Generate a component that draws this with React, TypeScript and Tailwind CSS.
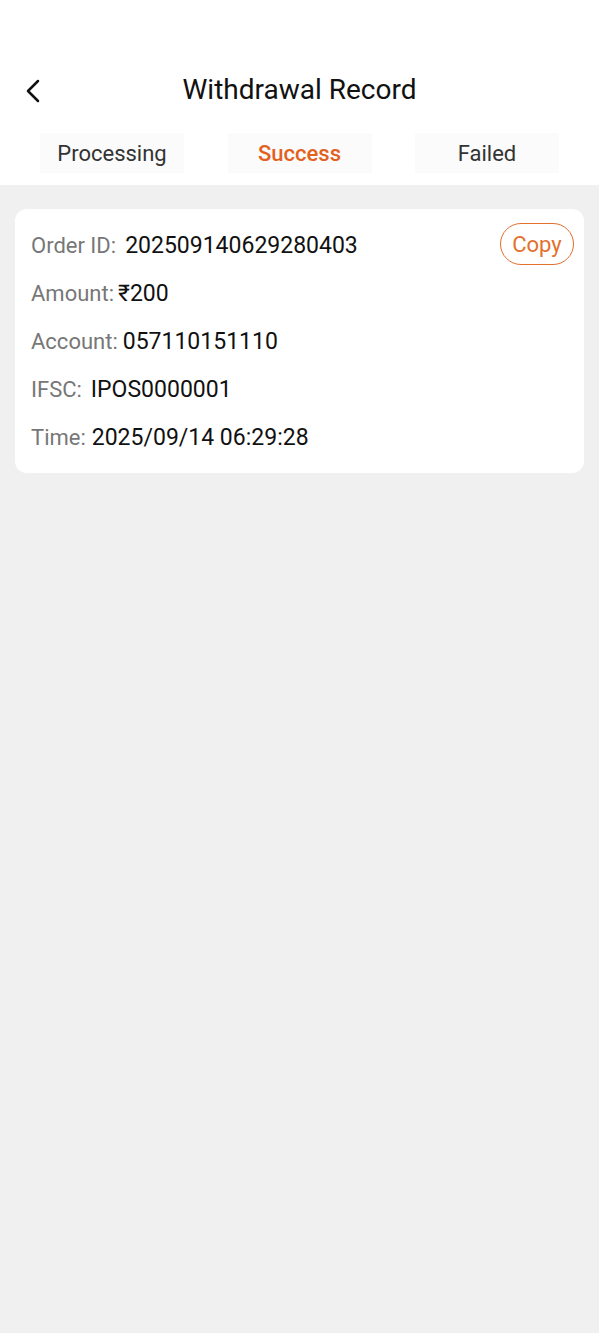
import { ChevronLeft } from "lucide-react";

const TABS = ["Processing", "Success", "Failed"];

const ROWS: { label: string; value: string; gap: string }[] = [
  { label: "Order ID:", value: "202509140629280403", gap: "ml-[9px]" },
  { label: "Amount:", value: "₹200", gap: "ml-[4px]" },
  { label: "Account:", value: "057110151110", gap: "ml-[5px]" },
  { label: "IFSC:", value: "IPOS0000001", gap: "ml-[9px]" },
  { label: "Time:", value: "2025/09/14 06:29:28", gap: "ml-[6px]" },
];

export default function App() {
  const active = "Success";
  return (
    <div
      className="min-h-[1333px] w-full bg-[#f0f0f0]"
      style={{ fontFamily: "Roboto, 'Noto Sans', sans-serif" }}
    >
      <div className="bg-white pt-[60px]">
        <div className="relative flex h-[60px] items-center justify-center">
          <button className="absolute left-[13px] top-[11px] text-[#111]">
            <ChevronLeft size={40} strokeWidth={1.5} />
          </button>
          <h1 className="text-[28px] text-[#111]">Withdrawal Record</h1>
        </div>
        <div className="flex justify-between px-[40px] pb-[12px] pt-[13px]">
          {TABS.map((t) => (
            <div
              key={t}
              className={`flex h-[40px] w-[144px] items-center justify-center bg-[#fbfbfb] text-[22px] ${
                t === active ? "font-medium text-[#e2611f]" : "text-[#333]"
              }`}
            >
              {t}
            </div>
          ))}
        </div>
      </div>

      <div className="px-[15px] pt-[24px]">
        <div className="relative rounded-[12px] bg-white px-[16px] pb-[11px] pt-[13px]">
          <button className="absolute right-[10px] top-[14px] flex h-[42px] w-[74px] items-center justify-center rounded-full border-[1.5px] border-[#e3702c] text-[22px] text-[#e3702c]">
            Copy
          </button>
          {ROWS.map((r) => (
            <div key={r.label} className="flex h-[48px] items-center">
              <div className="flex items-baseline">
                <span className="text-[22px] text-[#777]">{r.label}</span>
                <span className={`${r.gap} text-[23px] text-[#111]`}>{r.value}</span>
              </div>
            </div>
          ))}
        </div>
      </div>
    </div>
  );
}
